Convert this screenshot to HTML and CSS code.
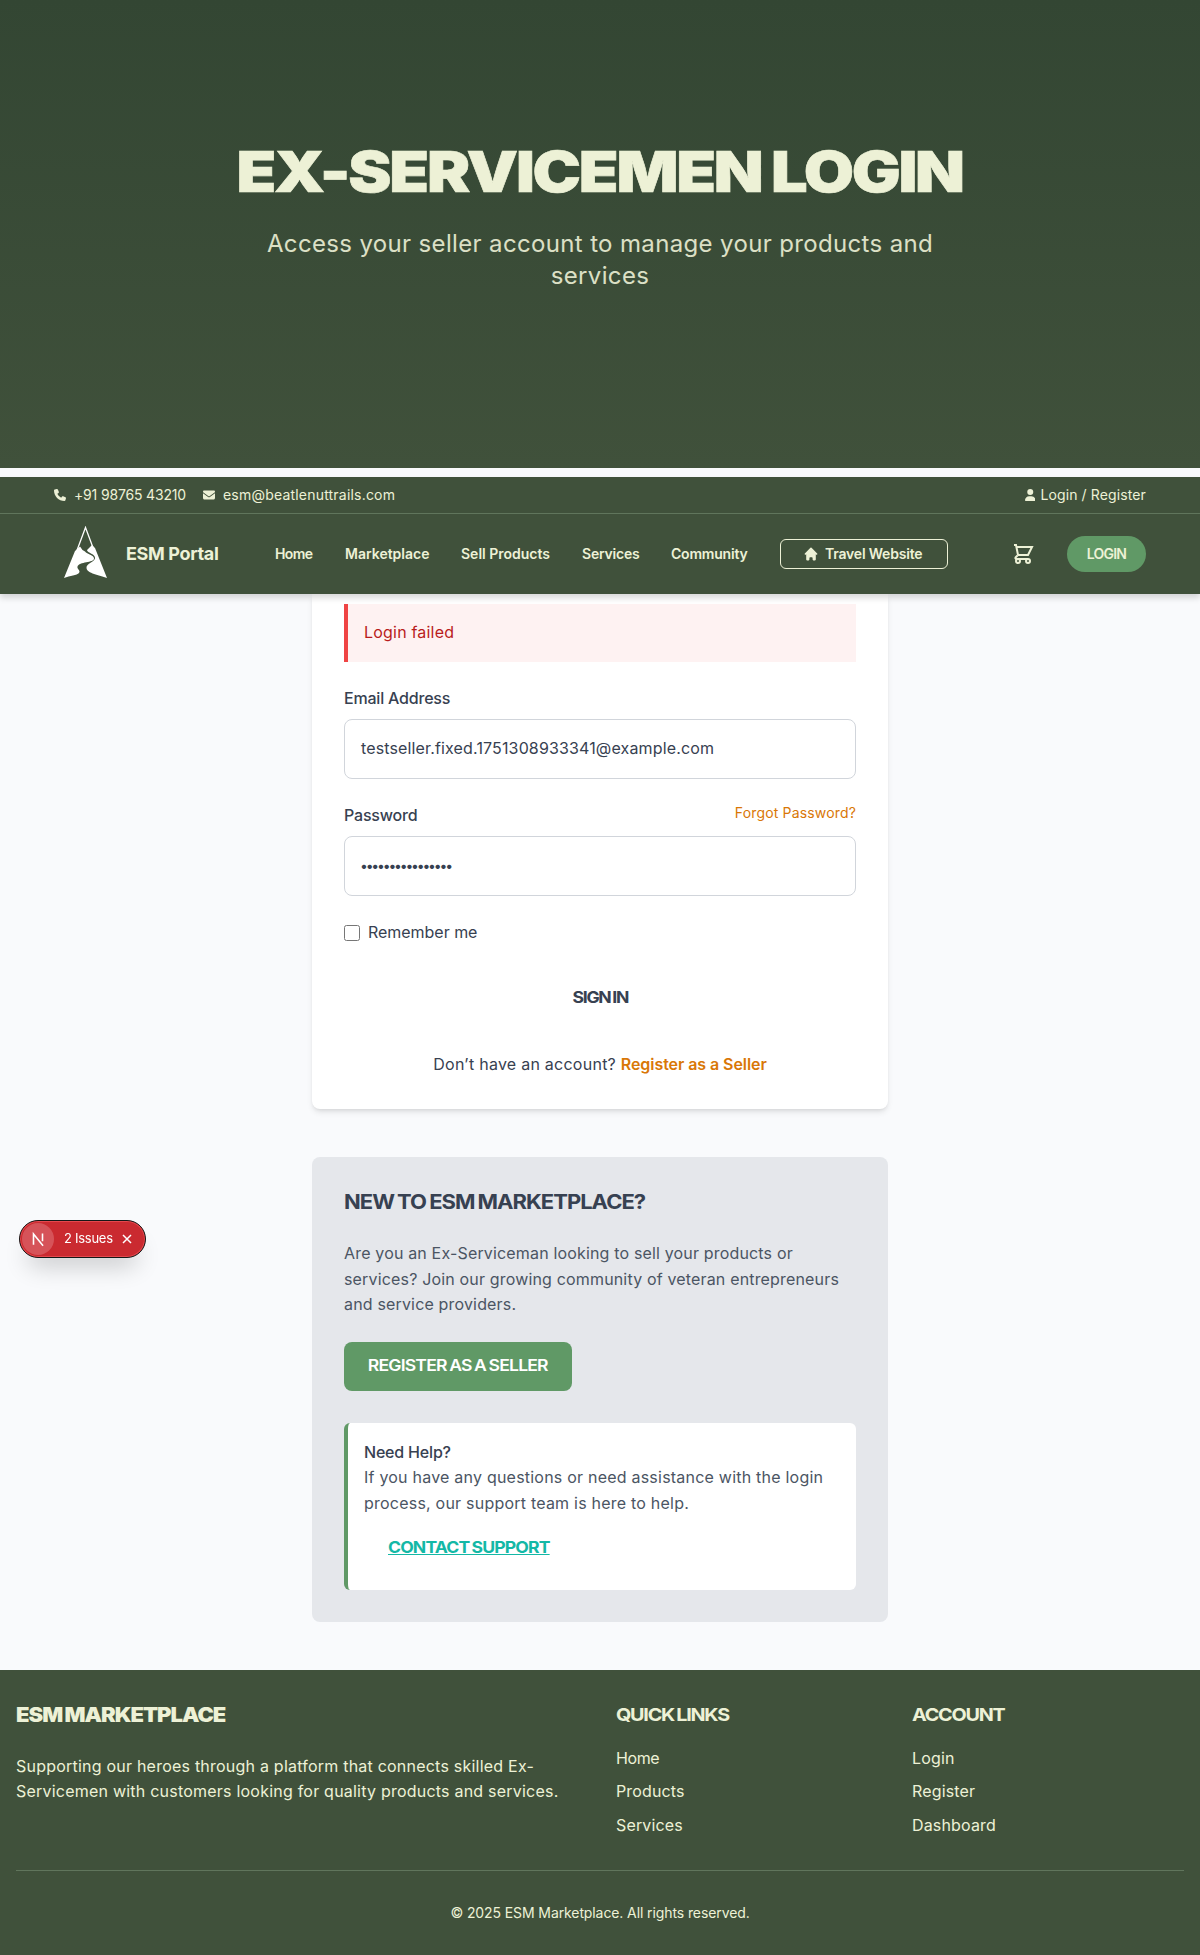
FILE: index.html
```html
<!DOCTYPE html>
<html lang="en">
<head>
<meta charset="utf-8">
<title>Ex-Servicemen Login</title>
<link rel="stylesheet" href="styles.css">
</head>
<body>
<section class="hero">
  <h1 class="hero-title">EX-SERVICEMEN LOGIN</h1>
  <p class="hero-sub">Access your seller account to manage your products and<br>services</p>
</section>
<header class="header">
  <div class="topbar">
    <div class="topbar-group">
      <svg class="ico" viewBox="0 0 512 512"><path d="M164.900 24.600c-7.700-18.600-28-28.500-47.400-23.200l-88 24C12.100 30.200 0 46 0 64C0 311.400 200.600 512 448 512c18 0 33.800-12.100 38.600-29.500l24-88c5.300-19.400-4.600-39.700-23.200-47.400l-96-40c-16.300-6.800-35.200-2.100-46.300 11.600L304.700 368C234.300 334.700 177.300 277.700 144 207.300L193.300 167c13.700-11.200 18.400-30 11.600-46.300l-40-96z"/></svg>
      <span class="phone">+91 98765 43210</span>
      <svg class="ico" viewBox="0 0 512 512"><path d="M48 64C21.500 64 0 85.500 0 112c0 15.100 7.100 29.300 19.200 38.400L236.800 313.600c11.400 8.500 27 8.500 38.400 0L492.800 150.400c12.100-9.100 19.200-23.300 19.200-38.400c0-26.500-21.500-48-48-48H48zM0 176V384c0 35.300 28.700 64 64 64H448c35.300 0 64-28.700 64-64V176L294.400 339.200c-22.800 17.100-54 17.100-76.800 0L0 176z"/></svg>
      <span class="mail">esm@beatlenuttrails.com</span>
    </div>
    <div class="topbar-user">
      <svg class="ico" viewBox="0 0 448 512"><path d="M224 256A128 128 0 1 0 224 0a128 128 0 1 0 0 256zm-45.700 48C79.800 304 0 383.800 0 482.300C0 498.700 13.300 512 29.700 512H418.300c16.400 0 29.700-13.300 29.700-29.700C448 383.800 368.200 304 269.700 304H178.300z"/></svg>
      <span class="account">Login / Register</span>
    </div>
  </div>
  <div class="navbar">
    <svg class="logo" viewBox="0 0 43 52"><path d="M12 27L21.500 1.500L31 27" fill="none" stroke="#fff" stroke-width="1.300"/><path d="M0 52L11 25l5-4.500 2.500 3.500 2.500 1.500c2 3 9 3.500 9 7 0 4.500-15 3-16.500 8-.8 3 3.500 3.500 1.500 6.500C13 49.500 6 49.500 0 52zM43 52L31 22l-3-3-5 5c0 3 9 4 8 8.500-1 4-9 5-8.500 9.500.5 5.500 13 7 20.500 10z" fill="#fff"/></svg>
    <span class="brand">ESM Portal</span>
    <nav class="nav">
      <a class="nav-tight">Home</a><a>Marketplace</a><a>Sell Products</a><a class="nav-snug">Services</a><a class="nav-snug">Community</a>
    </nav>
    <a class="travel"><svg class="home" viewBox="0 0 20 20"><path d="M10.707 2.293a1 1 0 00-1.414 0l-7 7a1 1 0 001.414 1.414L4 10.414V17a1 1 0 001 1h2a1 1 0 001-1v-2a1 1 0 011-1h2a1 1 0 011 1v2a1 1 0 001 1h2a1 1 0 001-1v-6.586l.293.293a1 1 0 001.414-1.414l-7-7z"/></svg><span>Travel Website</span></a>
    <svg class="cart" viewBox="0 0 24 24"><path d="M3 3h2l.4 2M7 13h10l4-8H5.400M7 13L5.400 5M7 13l-2.293 2.293c-.63.63-.184 1.707.707 1.707H17m0 0a2 2 0 100 4 2 2 0 000-4zm-8 2a2 2 0 11-4 0 2 2 0 014 0z"/></svg>
    <a class="login">LOGIN</a>
  </div>
</header>
<main class="main">
  <section class="card">
    <div class="alert">Login failed</div>
    <div class="field">
      <label class="label">Email Address</label>
      <div class="input">testseller.fixed.1751308933341@example.com</div>
    </div>
    <div class="field">
      <div class="label-row"><label class="label">Password</label><a class="forgot">Forgot Password?</a></div>
      <input class="input pw" type="password" value="abcdefghijklmnop">
    </div>
    <label class="remember"><input type="checkbox" class="check"><span>Remember me</span></label>
    <button class="signin"><span class="wide">SIGN IN</span></button>
    <p class="signup"><span>Don’t have an account?</span> <a>Register as a Seller</a></p>
  </section>
  <section class="join">
    <h2 class="join-title wide">NEW TO ESM MARKETPLACE?</h2>
    <p class="join-text">Are you an Ex-Serviceman looking to sell your products or<br>services? Join our growing community of veteran entrepreneurs<br>and service providers.</p>
    <a class="join-btn"><span class="wide">REGISTER AS A SELLER</span></a>
    <div class="help">
      <h3 class="help-title">Need Help?</h3>
      <p class="help-text">If you have any questions or need assistance with the login<br>process, our support team is here to help.</p>
      <a class="support wide">CONTACT SUPPORT</a>
    </div>
  </section>
</main>
<footer class="footer">
  <div class="footer-grid">
    <div><h3 class="f-brand wide">ESM MARKETPLACE</h3>
      <p class="f-text">Supporting our heroes through a platform that connects skilled Ex-<br>Servicemen with customers looking for quality products and services.</p></div>
    <div><h4 class="f-head wide">QUICK LINKS</h4><ul class="f-list"><li class="snug">Home</li><li>Products</li><li>Services</li></ul></div>
    <div><h4 class="f-head wide">ACCOUNT</h4><ul class="f-list"><li>Login</li><li>Register</li><li>Dashboard</li></ul></div>
  </div>
  <p class="copy">© 2025 ESM Marketplace. All rights reserved.</p>
</footer>
<div class="issues"><span class="n-mark"><svg viewBox="0 0 16 16"><path d="M4 13V3.500L12.500 14M12 3v7" fill="none" stroke="#fff" stroke-width="1.400"/></svg></span><span class="issues-text">2 Issues</span><svg class="x" viewBox="0 0 10 10"><path d="M1 1l8 8M9 1L1 9" stroke="#fff" stroke-width="1.500"/></svg></div>
</body>
</html>
```
FILE: styles.css
```css
* { box-sizing: border-box; margin: 0; padding: 0; }
body { font: 16px/25.6px Inter, sans-serif; color: #374151; background: #f9fafc; width: 1200px; }

/* Expanded display lettering */
.wide { width: max-content; transform: scaleX(1.1); transform-origin: left; word-spacing: -1px; white-space: nowrap; }

.hero { height: 468px; padding-top: 136px; text-align: center; color: #edf1d6; background: linear-gradient(#334633, #40513b); }
.hero-title { width: max-content; margin: 0 auto; font-size: 57px; line-height: 72px; font-weight: 900; white-space: nowrap; letter-spacing: -2px; word-spacing: -1px; transform: scaleX(1.14); -webkit-text-stroke: .6px #edf1d6; }
.hero-sub { margin-top: 20px; font-size: 24px; line-height: 32px; letter-spacing: .35px; opacity: .9; }

.header { margin-top: 9px; height: 117px; background: #40513b; color: #edf1d6; box-shadow: 0 4px 6px rgba(0,0,0,.15); position: relative; }
.ico { height: 12px; fill: currentColor; flex: none; }
.topbar { height: 37px; padding: 0 54px; display: flex; align-items: center; justify-content: space-between; border-bottom: 1px solid #60755c; font-size: 14px; line-height: 20px; white-space: nowrap; }
.topbar-group, .topbar-user { display: flex; align-items: center; }
.phone { margin: 0 16px 0 8px; width: 113px; letter-spacing: -.17px; }
.mail { margin-left: 8px; letter-spacing: .2px; }
.account { margin-left: 5px; letter-spacing: .12px; }
.navbar { height: 80px; display: flex; align-items: center; padding: 0 54px 0 64px; font-size: 14px; font-weight: 600; white-space: nowrap; }
.logo { width: 43px; height: 52px; margin-bottom: 4px; }
.brand { width: 149px; margin-left: 19px; font-size: 18px; font-weight: 700; letter-spacing: -.36px; }
.nav { display: grid; grid-template-columns: 70px 116px 121px 89px 109px; }
.nav-tight { letter-spacing: -.6px; }
.nav-snug { letter-spacing: -.2px; }
.travel { width: 168px; height: 30px; border: 1px solid #edf1d6; border-radius: 6px; display: flex; align-items: center; padding-left: 22px; gap: 6px; letter-spacing: -.2px; }
.home { width: 16px; height: 16px; fill: currentColor; flex: none; }
.cart { width: 24px; height: 24px; margin: 0 32px 0 63px; fill: none; stroke: #edf1d6; stroke-width: 2; }
.login { width: 79px; height: 36px; border-radius: 18px; background: #609966; text-align: center; line-height: 36px; letter-spacing: -.8px; }

.main { padding-bottom: 48px; }
.card { width: 576px; height: 515px; margin: 0 auto 48px; padding: 10px 32px 0; background: #fff; border-radius: 0 0 8px 8px; box-shadow: 0 4px 6px -1px rgba(0,0,0,.1), 0 2px 4px -2px rgba(0,0,0,.1); }
.alert { height: 58px; border-left: 4px solid #ef4444; background: #fef2f2; color: #b91c1c; padding: 16px; margin-bottom: 24px; letter-spacing: .2px; }
.field { margin-bottom: 24px; }
.label { display: block; font-weight: 500; margin-bottom: 8px; line-height: 25px; letter-spacing: -.2px; }
.label-row { display: flex; justify-content: space-between; }
.forgot { font-size: 14px; line-height: 20px; color: #d97706; letter-spacing: .16px; }
.input { display: block; width: 100%; height: 60px; border: 1px solid #d1d5db; border-radius: 8px; padding: 16px; font: inherit; color: #374151; background: #fff; letter-spacing: .144px; }
.pw { padding: 15px 16px 17px 15px; font-size: 14px; letter-spacing: -2.2px; }
.remember { display: flex; align-items: center; gap: 8px; height: 26px; letter-spacing: -.03px; }
.check { width: 16px; height: 16px; }
.signin { display: block; width: 100%; height: 49px; margin-top: 26px; border: 0; background: none; font: 700 16px Inter, sans-serif; color: #374151; letter-spacing: -1.15px; }
.signin .wide, .join-btn .wide { display: inline-block; transform-origin: center; }
.signup { margin-top: 31px; text-align: center; white-space: nowrap; letter-spacing: .25px; }
.signup a { color: #d97706; font-weight: 600; letter-spacing: -.07px; }

.join { width: 576px; height: 465px; margin: 0 auto; padding: 32px; background: #e5e7eb; border-radius: 8px; }
.join-title { font-size: 20px; line-height: 26px; font-weight: 700; margin-bottom: 26px; letter-spacing: -.9px; }
.join-text { color: #4b5563; white-space: nowrap; letter-spacing: .165px; }
.join-btn { display: block; width: 228px; height: 49px; line-height: 46px; margin: 24px 0 32px; text-align: center; background: #609966; color: #fff; border-radius: 8px; font-weight: 600; letter-spacing: -.75px; }
.help { height: 167px; padding: 17px 16px; background: #fff; border-left: 4px solid #609966; border-radius: 6px; }
.help-title { font-size: 16px; font-weight: 500; letter-spacing: -.19px; }
.help-text { color: #4b5563; white-space: nowrap; letter-spacing: .22px; }
.support { display: inline-block; margin: 18px 0 0 24px; font-weight: 700; color: #14b8a6; text-decoration: underline; letter-spacing: -.78px; }

.footer { height: 285px; padding: 32px 16px 0; background: #40513b; color: #edf1d6; }
.footer-grid { height: 169px; display: grid; grid-template-columns: 600px 296px 272px; border-bottom: 1px solid #60755c; white-space: nowrap; }
.f-brand { font-size: 20px; font-weight: 900; margin: 1px 0 25px; letter-spacing: -.9px; }
.f-text { letter-spacing: .22px; }
.f-head { font-size: 18px; font-weight: 700; margin-bottom: 18px; letter-spacing: -1.15px; }
.f-list { list-style: none; }
.f-list li { margin-bottom: 8px; letter-spacing: .15px; }
.f-list .snug { letter-spacing: -.4px; }
.copy { margin-top: 32px; font-size: 14px; line-height: 20px; text-align: center; letter-spacing: -.1px; }

.issues { position: fixed; left: 19px; top: 1220px; width: 127px; height: 38px; border-radius: 19px; background: #ca2a30; border: 1px solid #171717; box-shadow: inset 0 0 0 1px #e5484d, 0 16px 24px -8px rgba(0,0,0,.2); display: flex; align-items: center; padding-left: 2px; color: #fff; font-size: 13px; letter-spacing: -.27px; }
.n-mark { width: 32px; height: 32px; border-radius: 50%; background: #d65359; padding: 7px; }
.n-mark svg { display: block; width: 18px; height: 18px; }
.issues-text { width: 58px; margin-left: 10px; }
.x { width: 10px; height: 10px; }
```
